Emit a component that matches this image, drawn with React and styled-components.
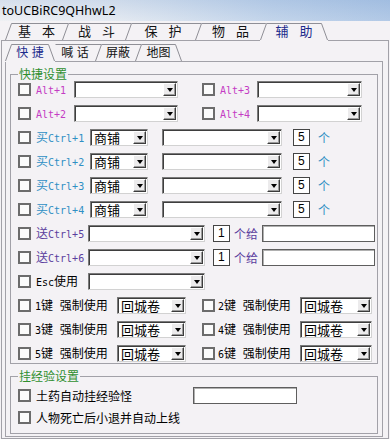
import React from 'react';
import styled, { createGlobalStyle } from 'styled-components';

const BG = '#f4f2f5';
const LINE = '#a2a1a8';
const MAGENTA = '#c43cc4';
const CYAN = '#2f8fc4';
const PURPLE = '#5b3e9e';
const GREEN = '#2f8f2f';

const GlobalStyle = createGlobalStyle`
  html, body { margin: 0; padding: 0; background: ${BG}; }
  body {
    font-family: "Noto Sans CJK SC", "Noto Sans", sans-serif;
    font-size: 12px;
    color: #000;
  }
  *, *::before, *::after { box-sizing: border-box; }
`;

const Window = styled.div`
  width: 390px;
  height: 439px;
  overflow: hidden;
  background: ${BG};
  display: flex;
  flex-direction: column;
`;

const TitleBar = styled.div`
  flex: none;
  height: 21px;
  padding-left: 2px;
  display: flex;
  align-items: center;
  font-family: "Noto Sans", "Open Sans", sans-serif;
  font-size: 12.5px;
  color: #000;
  background:
    linear-gradient(to bottom, rgba(150, 180, 220, 0.25), rgba(255, 255, 255, 0.15)),
    linear-gradient(to right, #eceef2 0%, #dfe6ef 30%, #b8cde7 70%, #a5c0e2 100%);
`;

const TabStrip = styled.div`
  flex: none;
  position: relative;
  z-index: 2;
  display: flex;
  align-items: flex-end;
  height: ${p => p.$h}px;
  padding-left: ${p => p.$pl}px;
`;

const TabItem = styled.div`
  position: relative;
  flex: none;
  width: ${p => p.$w}px;
  height: ${p => (p.$active ? 18 : 17)}px;
  margin-left: ${p => (p.$first ? 0 : -6)}px;
  margin-bottom: ${p => (p.$active ? -1 : 0)}px;
  z-index: ${p => (p.$active ? 3 : 1)};
  display: flex;
  justify-content: center;
  align-items: flex-start;
  font-size: ${p => p.$fs}px;
  line-height: 16px;
  word-spacing: ${p => p.$ws}px;
  color: ${p => (p.$active ? '#1c2b8c' : '#111')};
`;

const TabSvg = styled.svg`
  position: absolute;
  left: 0;
  top: 0;
  overflow: visible;
  pointer-events: none;
`;

const TabText = styled.span`
  position: relative;
  white-space: pre;
`;

function Tab({ w, label, active, first, left = true, right = false, fs, ws }) {
  const h = 17;
  const d = 6;
  const parts = [];
  if (left) parts.push(`M0.5,${h} L${d + 0.5},0.5`);
  else parts.push(`M${d + 0.5},0.5`);
  parts.push(`L${right ? w - d - 0.5 : w},0.5`);
  if (right) parts.push(`L${w - 0.5},${h}`);
  return (
    <TabItem $w={w} $active={active} $first={first} $fs={fs} $ws={ws}>
      <TabSvg width={w} height={h + 1}>
        {active && (
          <polygon points={`0,${h + 1} 0,${h} ${d},0 ${w - d},0 ${w},${h} ${w},${h + 1}`} fill={BG} />
        )}
        <path d={parts.join(' ')} fill="none" stroke="#8f8f96" strokeWidth="1" />
      </TabSvg>
      <TabText>{label}</TabText>
    </TabItem>
  );
}

const OuterPanel = styled.div`
  flex: 1;
  display: flex;
  flex-direction: column;
  margin: 0 1px 1px 1px;
  border: 1px solid ${LINE};
  padding: 0 5px 1px 3px;
  position: relative;
  z-index: 1;
`;

const InnerPanel = styled.div`
  flex: 1;
  display: flex;
  flex-direction: column;
  border: 1px solid ${LINE};
  padding: 5px 4px 2px 4px;
`;

const Group = styled.fieldset`
  margin: ${p => p.$mt || 0}px 0 0 0;
  min-width: 0;
  border: 1px solid ${LINE};
  padding: ${p => p.$pt}px 6px ${p => p.$pb}px 7px;
`;

const Legend = styled.legend`
  padding: 0 1px;
  margin: 0;
  font-size: 12px;
  line-height: 14px;
  color: ${GREEN};
`;

const Rows = styled.div`
  display: flex;
  flex-direction: column;
  gap: ${p => p.$gap}px;
`;

const Row = styled.div`
  display: flex;
  align-items: center;
  height: 17px;
`;

const Check = styled.span`
  flex: none;
  width: 13px;
  height: 13px;
  margin-left: ${p => p.$ml || 0}px;
  border: 2px solid #6c6c6c;
  background: #fbfbfb;
`;

const Label = styled.span`
  flex: none;
  width: ${p => (p.$w ? `${p.$w}px` : 'auto')};
  margin-left: ${p => (p.$ml ?? 5)}px;
  color: ${p => p.$c || '#000'};
  font-size: 12px;
  line-height: 17px;
  word-spacing: ${p => p.$ws || 0}px;
  white-space: pre;
`;

const Mono = styled.span`
  font-family: "DejaVu Sans Mono", "Liberation Mono", monospace;
  font-size: 10px;
`;

const Box = styled.span`
  flex: none;
  display: flex;
  width: ${p => p.$w}px;
  height: 17px;
  margin-left: ${p => p.$ml || 0}px;
  background: #fff;
  border-style: solid;
  border-width: 1px;
  border-color: #7a7a7a #d2d2d2 #d2d2d2 #7a7a7a;
  box-shadow: inset 1px 1px 0 #3e3e3e;
  padding: 1px 1px 1px 1px;
`;

const BoxText = styled.span`
  flex: 1;
  min-width: 0;
  padding-left: 2px;
  font-size: 13px;
  line-height: 13px;
  white-space: nowrap;
`;

const DropBtn = styled.span`
  flex: none;
  width: 13px;
  display: flex;
  align-items: center;
  justify-content: center;
  background: #ecebec;
  border-style: solid;
  border-width: 1px;
  border-color: #ffffff #3c3c3c #3c3c3c #ffffff;
  box-shadow: inset -1px -1px 0 #9c9c9c;
  &::after {
    content: '';
    border-left: 3.5px solid transparent;
    border-right: 3.5px solid transparent;
    border-top: 4px solid #000;
  }
`;

function Combo({ w, ml, text }) {
  return (
    <Box $w={w} $ml={ml}>
      <BoxText>{text}</BoxText>
      <DropBtn />
    </Box>
  );
}

const NumBox = styled.span`
  flex: none;
  width: 17px;
  height: 17px;
  margin-left: ${p => p.$ml}px;
  background: #fff;
  border: 1px solid #444;
  font-family: "Liberation Sans", sans-serif;
  font-size: 12px;
  line-height: 15px;
  padding-left: 4px;
`;

const TextInput = styled.span`
  flex: none;
  width: ${p => p.$w}px;
  height: 17px;
  margin-left: ${p => p.$ml || 0}px;
  background: #fff;
  border: 1px solid #5e5e5e;
  box-shadow: inset 1px 1px 0 #b0b0b0;
`;

const mainTabs = [
  { label: '基 本', w: 63 },
  { label: '战 斗', w: 69 },
  { label: '保 护', w: 76 },
  { label: '物 品', w: 71 },
  { label: '辅 助', w: 68, active: true },
];

const subTabs = [
  { label: '快 捷', w: 50, active: true },
  { label: '喊 话', w: 52 },
  { label: '屏蔽', w: 46 },
  { label: '地图', w: 47 },
];

function Strip({ tabs, h, pl, fs, ws }) {
  const activeIdx = tabs.findIndex(t => t.active);
  return (
    <TabStrip $h={h} $pl={pl}>
      {tabs.map((t, i) => (
        <Tab
          key={t.label}
          w={t.w}
          label={t.label}
          active={!!t.active}
          first={i === 0}
          left={i !== activeIdx + 1 || activeIdx < 0}
          right={!!t.active || i === tabs.length - 1}
          fs={fs}
          ws={ws}
        />
      ))}
    </TabStrip>
  );
}

function AltRow({ a, b }) {
  return (
    <Row>
      <Check />
      <Label $w={38} $c={MAGENTA}><Mono>{a}</Mono></Label>
      <Combo w={104} />
      <Check $ml={24} />
      <Label $w={37} $c={MAGENTA}><Mono>{b}</Mono></Label>
      <Combo w={105} />
    </Row>
  );
}

function BuyRow({ n }) {
  return (
    <Row>
      <Check />
      <Label $w={54} $c={CYAN}>买<Mono>Ctrl+{n}</Mono></Label>
      <Combo w={58} text="商铺" />
      <Combo w={120} ml={14} />
      <NumBox $ml={11}>5</NumBox>
      <Label $ml={8} $c={CYAN}>个</Label>
    </Row>
  );
}

function SendRow({ n }) {
  return (
    <Row>
      <Check />
      <Label $w={52} $c={PURPLE}>送<Mono>Ctrl+{n}</Mono></Label>
      <Combo w={117} />
      <NumBox $ml={8}>1</NumBox>
      <Label $ml={4} $c={PURPLE}>个给</Label>
      <TextInput $w={113} $ml={4} />
    </Row>
  );
}

function KeyRow({ a, b }) {
  return (
    <Row>
      <Check />
      <Label $w={82} $ml={4} $ws={4}><Mono>{a}</Mono>键 强制使用</Label>
      <Combo w={69} text="回城卷" />
      <Check $ml={16} />
      <Label $w={82} $ml={3} $ws={4}><Mono>{b}</Mono>键 强制使用</Label>
      <Combo w={72} text="回城卷" />
    </Row>
  );
}

export default function App() {
  return (
    <>
      <GlobalStyle />
      <Window>
        <TitleBar>toUCBiRC9QHhwL2</TitleBar>
        <Strip tabs={mainTabs} h={19} pl={5} fs={13} ws={8} />
        <OuterPanel>
          <Strip tabs={subTabs} h={20} pl={0} fs={12} ws={1} />
          <InnerPanel>
            <Group $pt={0} $pb={1}>
              <Legend>快捷设置</Legend>
              <Rows $gap={7}>
                <AltRow a="Alt+1" b="Alt+3" />
                <AltRow a="Alt+2" b="Alt+4" />
                <BuyRow n={1} />
                <BuyRow n={2} />
                <BuyRow n={3} />
                <BuyRow n={4} />
                <SendRow n={5} />
                <SendRow n={6} />
                <Row>
                  <Check />
                  <Label $w={52}><Mono>Esc</Mono>使用</Label>
                  <Combo w={117} />
                </Row>
                <KeyRow a="1" b="2" />
                <KeyRow a="3" b="4" />
                <KeyRow a="5" b="6" />
              </Rows>
            </Group>
            <Group $mt={5} $pt={4} $pb={7}>
              <Legend>挂经验设置</Legend>
              <Rows $gap={5}>
                <Row>
                  <Check />
                  <Label $w={157}>土药自动挂经验怪</Label>
                  <TextInput $w={104} />
                </Row>
                <Row>
                  <Check />
                  <Label>人物死亡后小退并自动上线</Label>
                </Row>
              </Rows>
            </Group>
          </InnerPanel>
        </OuterPanel>
      </Window>
    </>
  );
}
